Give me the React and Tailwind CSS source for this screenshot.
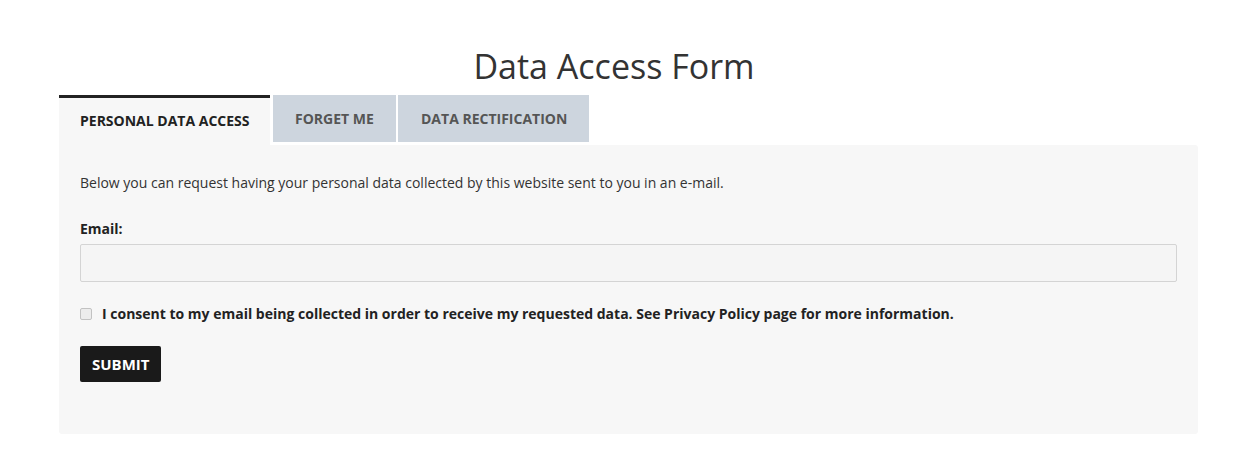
export default function App() {
  return (
    <div className="min-h-[458px] bg-white text-[#333] font-['Open_Sans',sans-serif]">
      <div className="pl-[59px] pr-[42px] pt-[41px]">
        <h1 className="text-[34px] leading-[50px] font-normal text-[#333] text-center pr-[29px] mb-[4px]">Data Access Form</h1>
        <div className="flex items-start">
          <div className="w-[211px] h-[50px] border-t-[3px] border-[#222] bg-[#f7f7f7] pl-[21px] pt-[13px] text-[14px] font-bold text-[#222] leading-[20px]">
            PERSONAL DATA ACCESS
          </div>
          <div className="ml-[3px] w-[123px] h-[47px] bg-[#cdd5de] pl-[22px] pt-[14px] text-[14px] font-bold text-[#555] leading-[20px]">
            FORGET ME
          </div>
          <div className="ml-[2px] w-[191px] h-[47px] bg-[#cdd5de] pl-[23px] pt-[14px] text-[14px] font-bold text-[#555] leading-[20px]">
            DATA RECTIFICATION
          </div>
        </div>
        <div className="bg-[#f7f7f7] rounded-b-[3px] rounded-tr-[3px] h-[289px] px-[21px] pt-[28px]">
          <p className="text-[14px] leading-[20px] text-[#333]">
            Below you can request having your personal data collected by this website sent to you in an e-mail.
          </p>
          <label className="block mt-[26px] text-[14px] font-bold leading-[20px] text-[#222]">Email:</label>
          <input type="email" className="block mt-[5px] w-full h-[38px] border border-[#d4d4d4] rounded-[2px] bg-[#f5f5f5] outline-none" />
          <div className="flex items-center mt-[21px]">
            <span className="w-[12px] h-[12px] border border-[#c2c2c2] rounded-[2px] bg-[#ececec] shrink-0"></span>
            <span className="ml-[10px] text-[14px] font-bold leading-[22px] text-[#222]">
              I consent to my email being collected in order to receive my requested data. See Privacy Policy page for more information.
            </span>
          </div>
          <button className="mt-[21px] h-[36px] px-[12px] bg-[#1a1a1a] text-white text-[15px] font-bold rounded-[2px] leading-[20px]">
            SUBMIT
          </button>
        </div>
      </div>
    </div>
  );
}
